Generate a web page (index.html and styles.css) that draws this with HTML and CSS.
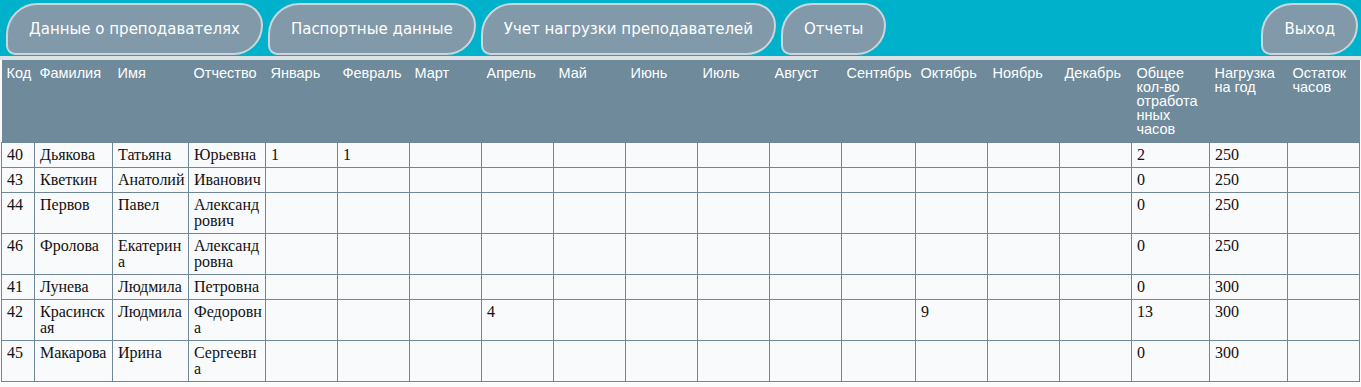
FILE: index.html
```html
<!DOCTYPE html>
<html lang="ru">
<head>
    <meta charset="UTF-8">
    <meta name="viewport" content="width=device-width, initial-scale=1.0">
    <title>Учет нагрузки преподавателей</title>
    <link rel="stylesheet" href="styles.css">
</head>
<body>

<div class="menu">
    <button class="menu-btn">Данные о преподавателях</button>
    <button class="menu-btn">Паспортные данные</button>
    <button class="menu-btn">Учет нагрузки преподавателей</button>
    <button class="menu-btn">Отчеты</button>
    <button class="menu-btn exit">Выход</button>
</div>

<table class="load-table">
    <colgroup>
        <col style="width: 33px">
        <col style="width: 78px">
        <col style="width: 76px">
        <col style="width: 77px">
        <col style="width: 72px">
        <col style="width: 72px">
        <col style="width: 72px">
        <col style="width: 72px">
        <col style="width: 72px">
        <col style="width: 72px">
        <col style="width: 72px">
        <col style="width: 72px">
        <col style="width: 74px">
        <col style="width: 72px">
        <col style="width: 72px">
        <col style="width: 72px">
        <col style="width: 78px">
        <col style="width: 78px">
        <col style="width: 72px">
    </colgroup>
    <thead>
        <tr>
            <th>Код</th>
            <th>Фамилия</th>
            <th>Имя</th>
            <th>Отчество</th>
            <th>Январь</th>
            <th>Февраль</th>
            <th>Март</th>
            <th>Апрель</th>
            <th>Май</th>
            <th>Июнь</th>
            <th>Июль</th>
            <th>Август</th>
            <th>Сентябрь</th>
            <th>Октябрь</th>
            <th>Ноябрь</th>
            <th>Декабрь</th>
            <th class="narrow">Общее кол-во отработанных часов</th>
            <th>Нагрузка на год</th>
            <th>Остаток часов</th>
        </tr>
    </thead>
    <tbody>
        <tr>
            <td>40</td><td>Дьякова</td><td>Татьяна</td><td>Юрьевна</td>
            <td>1</td><td>1</td><td></td><td></td><td></td><td></td><td></td><td></td><td></td><td></td><td></td><td></td>
            <td>2</td><td>250</td><td></td>
        </tr>
        <tr>
            <td>43</td><td>Кветкин</td><td>Анатолий</td><td>Иванович</td>
            <td></td><td></td><td></td><td></td><td></td><td></td><td></td><td></td><td></td><td></td><td></td><td></td>
            <td>0</td><td>250</td><td></td>
        </tr>
        <tr>
            <td>44</td><td>Первов</td><td>Павел</td><td>Александрович</td>
            <td></td><td></td><td></td><td></td><td></td><td></td><td></td><td></td><td></td><td></td><td></td><td></td>
            <td>0</td><td>250</td><td></td>
        </tr>
        <tr>
            <td>46</td><td>Фролова</td><td>Екатерина</td><td>Александровна</td>
            <td></td><td></td><td></td><td></td><td></td><td></td><td></td><td></td><td></td><td></td><td></td><td></td>
            <td>0</td><td>250</td><td></td>
        </tr>
        <tr>
            <td>41</td><td>Лунева</td><td>Людмила</td><td>Петровна</td>
            <td></td><td></td><td></td><td></td><td></td><td></td><td></td><td></td><td></td><td></td><td></td><td></td>
            <td>0</td><td>300</td><td></td>
        </tr>
        <tr>
            <td>42</td><td>Красинская</td><td>Людмила</td><td>Федоровна</td>
            <td></td><td></td><td></td><td>4</td><td></td><td></td><td></td><td></td><td></td><td>9</td><td></td><td></td>
            <td>13</td><td>300</td><td></td>
        </tr>
        <tr>
            <td>45</td><td>Макарова</td><td>Ирина</td><td>Сергеевна</td>
            <td></td><td></td><td></td><td></td><td></td><td></td><td></td><td></td><td></td><td></td><td></td><td></td>
            <td>0</td><td>300</td><td></td>
        </tr>
    </tbody>
</table>

</body>
</html>
```

FILE: styles.css
```css
body {
    margin: 0;
    background-color: #fbfbfc;
    font-family: "Liberation Serif", "Times New Roman", serif;
}
.menu {
    display: flex;
    align-items: center;
    gap: 5px;
    height: 56px;
    padding: 0 3px 0 6px;
    background-color: #00b1cb;
    border-bottom: 4px solid #dbe2e6;
}
.menu-btn {
    height: 52px;
    padding: 0 21px;
    margin-top: 2px;
    background-color: #8199a9;
    color: #fff;
    border: 2px solid #c9d6dc;
    border-radius: 34px 24px 32px 10px;
    font-family: "DejaVu Sans", Verdana, sans-serif;
    font-size: 15px;
    cursor: pointer;
}
.menu-btn:hover {
    background-color: #6d8697;
}
.exit {
    margin-left: auto;
}
.load-table {
    width: 1359px;
    margin-left: 1px;
    table-layout: fixed;
    border-collapse: collapse;
    background-color: #f9fafc;
}
.load-table th {
    height: 72px;
    padding: 6px 2px 4px 5px;
    background-color: #6e8a9b;
    color: #fff;
    font-family: "Liberation Sans", Arial, sans-serif;
    font-size: 14.5px;
    font-weight: normal;
    line-height: 14px;
    text-align: left;
    vertical-align: top;
    overflow-wrap: anywhere;
}
.load-table th.narrow {
    padding-right: 8px;
}
.load-table td {
    padding: 4px 2px 4px 5px;
    border: 1px solid #6f8797;
    font-size: 16px;
    line-height: 16px;
    color: #111;
    vertical-align: top;
    overflow-wrap: anywhere;
}
```
